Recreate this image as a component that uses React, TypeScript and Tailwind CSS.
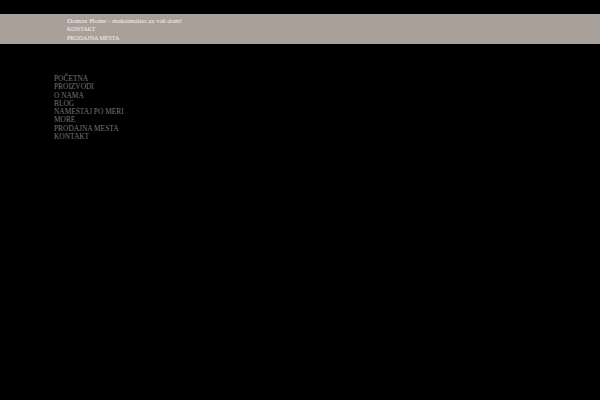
export default function App() {
  const menu = ["POČETNA", "PROIZVODI", "O NAMA", "BLOG", "NAMEŠTAJ PO MERI", "MORE", "PRODAJNA MESTA", "KONTAKT"];
  return (
    <div className="min-h-[400px] w-full bg-black font-['Liberation_Serif',serif]">
      <div className="h-[14px]" />
      <div className="h-[30px] bg-[#aaa09a] pl-[67px] pt-[3px] leading-[8.3px] text-[#f2f0ee]">
        <div className="text-[7px]">Domax Home - maksimalno za vaš dom!</div>
        <div className="text-[6px]">KONTAKT</div>
        <div className="text-[6px]">PRODAJNA MESTA</div>
      </div>
      <ul className="pl-[54px] pt-[31px] text-[7.4px] leading-[8.3px] text-[#767676]">
        {menu.map((m) => (
          <li key={m}>{m}</li>
        ))}
      </ul>
    </div>
  );
}
